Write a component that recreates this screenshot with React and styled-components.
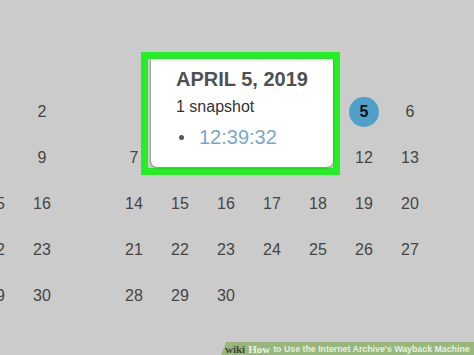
import React from 'react';
import styled, { createGlobalStyle } from 'styled-components';

const GlobalStyle = createGlobalStyle`
    html, body {
        margin:0;
        padding:0;
        background:#cbcbcb;
    }
    body {
        font-family:"Liberation Sans", Arial, sans-serif;
    }
`;

const Stage = styled.div`
    position:relative;
    width:474px;
    height:355px;
    overflow:hidden;
    background:#cbcbcb;
`;

const Calendar = styled.div`
    display:flex;
    gap:46px;
    margin-left:-27px;
    padding-top:89px;
`;

// only the visible week-day columns of a month are laid out
const Month = styled.div`
    display:grid;
    grid-template-columns:repeat(${({ cols }) => cols}, 46px);
    grid-auto-rows:46px;
`;

const Day = styled.div`
    display:flex;
    justify-content:center;
    align-items:center;
    font-size:16px;
    color:#454545;
`;

const Selected = styled.span`
    display:flex;
    justify-content:center;
    align-items:center;
    width:30px;
    height:30px;
    border-radius:50%;
    background:#509fc8;
    color:#111;
    font-weight:bold;
    font-size:16px;
`;

const Highlight = styled.div`
    position:absolute;
    left:141px;
    top:52px;
    width:199px;
    height:123px;
    box-sizing:border-box;
    border:7px solid #24ee24;
    display:flex;
    align-items:flex-end;
`;

const Card = styled.div`
    flex:1;
    height:calc(100% - 1px);
    margin:0 0 1px 3px;
    box-sizing:border-box;
    padding:9px 0 0 25px;
    background:#fff;
    border-radius:0 0 6px 6px;
    box-shadow:0 1px 2px rgba(0,0,0,0.35), -1px 0 1px rgba(0,0,0,0.15);
`;

const Title = styled.div`
    font-size:20px;
    line-height:22px;
    font-weight:bold;
    color:#505050;
`;

const Count = styled.div`
    margin-top:8px;
    font-size:16px;
    line-height:18px;
    color:#333;
`;

const Snapshot = styled.div`
    display:flex;
    align-items:center;
    gap:15px;
    margin-top:10px;
    padding-left:3px;
`;

const Bullet = styled.span`
    width:5px;
    height:5px;
    border-radius:50%;
    background:#555;
`;

const Time = styled.span`
    font-size:20px;
    line-height:22px;
    color:#7aa7cc;
`;

const Watermark = styled.div`
    position:absolute;
    right:0;
    bottom:0;
    width:253px;
    height:13px;
    display:flex;
    align-items:center;
    gap:3px;
    padding-left:4px;
    box-sizing:border-box;
    background:#9ab67f;
    clip-path:polygon(5px 0, 100% 0, 100% 100%, 0 100%);
    white-space:nowrap;
`;

const Wiki = styled.span`
    font-family:"Liberation Serif", "Times New Roman", serif;
    font-weight:bold;
    font-size:11px;
    color:#3c4636;
`;

const How = styled.span`
    font-family:"Liberation Serif", "Times New Roman", serif;
    font-weight:bold;
    font-size:11px;
    color:#eef4e6;
`;

const Caption = styled.span`
    font-weight:bold;
    font-size:8.8px;
    color:#e8efe0;
`;

// March 2019: only Fri + Sat columns are on screen
const march = [
    [null, 2],
    [null, 9],
    [15, 16],
    [22, 23],
    [29, 30],
];

// April 2019 (starts on Monday); days under the tooltip are left blank
const covered = [1, 2, 3, 4, 8, 9, 10, 11];
const april = Array.from({ length: 5 }, (_, w) =>
    Array.from({ length: 7 }, (_, d) => {
        const n = w * 7 + d;
        return n >= 1 && n <= 30 && !covered.includes(n) ? n : null;
    })
);

const MonthGrid = ({ weeks, selected }) => (
    <Month cols={weeks[0].length}>
        {weeks.flat().map((n, i) => (
            <Day key={i}>
                {n === selected && n ? <Selected>{n}</Selected> : n}
            </Day>
        ))}
    </Month>
);

export default function App() {
    return (
        <Stage>
            <GlobalStyle />
            <Calendar>
                <MonthGrid weeks={march} />
                <MonthGrid weeks={april} selected={5} />
            </Calendar>
            <Highlight>
                <Card>
                    <Title>APRIL 5, 2019</Title>
                    <Count>1 snapshot</Count>
                    <Snapshot>
                        <Bullet />
                        <Time>12:39:32</Time>
                    </Snapshot>
                </Card>
            </Highlight>
            <Watermark>
                <Wiki>wiki</Wiki>
                <How>How</How>
                <Caption>to Use the Internet Archive's Wayback Machine</Caption>
            </Watermark>
        </Stage>
    );
}
